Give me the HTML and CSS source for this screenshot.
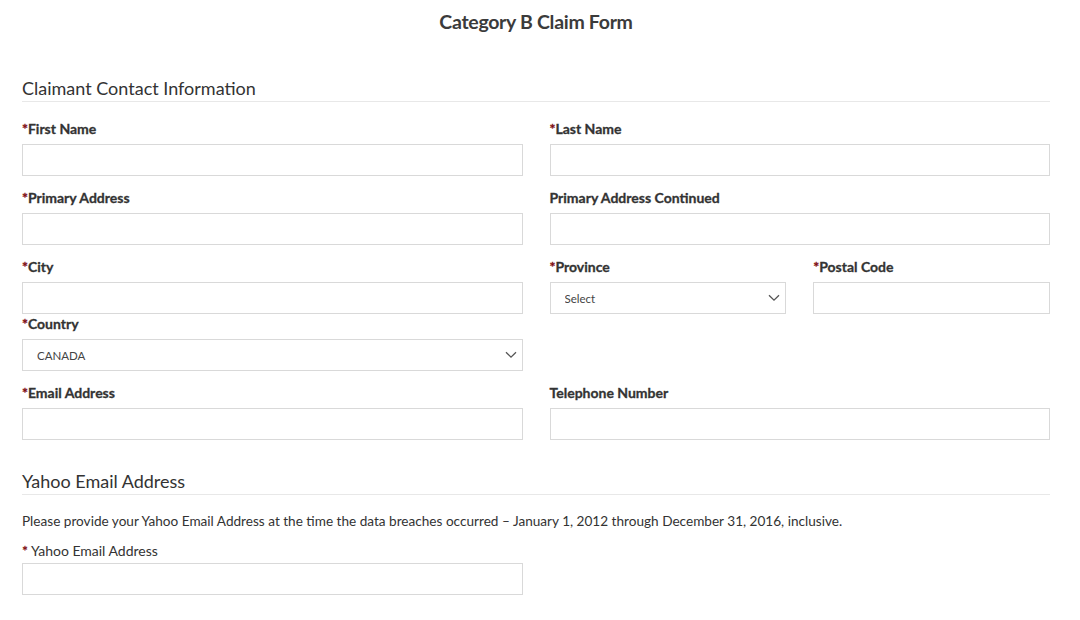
FILE: index.html
```html
<!DOCTYPE html>
<html lang="en">
<head>
    <meta charset="UTF-8">
    <meta name="viewport" content="width=device-width, initial-scale=1.0">
    <title>Category B Claim Form</title>
    <link rel="stylesheet" href="styles.css">
</head>
<body>

    <div class="page">
        <h1 class="form-title">Category B Claim Form</h1>

        <!-- Claimant contact -->
        <h2 class="section-title">Claimant Contact Information</h2>

        <div class="row">
            <div class="field">
                <label class="label"><span class="req">*</span>First Name</label>
                <input type="text" class="input">
            </div>
            <div class="field">
                <label class="label"><span class="req">*</span>Last Name</label>
                <input type="text" class="input">
            </div>
        </div>

        <div class="row">
            <div class="field">
                <label class="label"><span class="req">*</span>Primary Address</label>
                <input type="text" class="input">
            </div>
            <div class="field">
                <label class="label">Primary Address Continued</label>
                <input type="text" class="input">
            </div>
        </div>

        <div class="row">
            <div class="field">
                <label class="label"><span class="req">*</span>City</label>
                <input type="text" class="input">
                <label class="label label-tight"><span class="req">*</span>Country</label>
                <div class="select-wrap">
                    <select class="select">
                        <option>CANADA</option>
                    </select>
                    <svg class="chevron" width="12" height="8" viewBox="0 0 12 8"><path d="M1 1.2 L6 6.2 L11 1.2" fill="none" stroke="#555" stroke-width="1.3"/></svg>
                </div>
            </div>
            <div class="field">
                <div class="split">
                    <div class="field">
                        <label class="label"><span class="req">*</span>Province</label>
                        <div class="select-wrap">
                            <select class="select">
                                <option>Select</option>
                            </select>
                            <svg class="chevron" width="12" height="8" viewBox="0 0 12 8"><path d="M1 1.2 L6 6.2 L11 1.2" fill="none" stroke="#555" stroke-width="1.3"/></svg>
                        </div>
                    </div>
                    <div class="field">
                        <label class="label"><span class="req">*</span>Postal Code</label>
                        <input type="text" class="input">
                    </div>
                </div>
            </div>
        </div>

        <div class="row">
            <div class="field">
                <label class="label"><span class="req">*</span>Email Address</label>
                <input type="text" class="input">
            </div>
            <div class="field">
                <label class="label">Telephone Number</label>
                <input type="text" class="input">
            </div>
        </div>

        <!-- Yahoo email -->
        <h2 class="section-title section-gap">Yahoo Email Address</h2>
        <p class="note">Please provide your Yahoo Email Address at the time the data breaches occurred – January 1, 2012 through December 31, 2016, inclusive.</p>

        <div class="row">
            <div class="field">
                <label class="label label-plain"><span class="req">*</span> Yahoo Email Address</label>
                <input type="text" class="input">
            </div>
            <div class="field"></div>
        </div>
    </div>

</body>
</html>
```

FILE: styles.css
```css
/* Base */
body {
    margin: 0;
    font-family: Lato, 'Liberation Sans', sans-serif;
    color: #333;
    background: #fff;
}

.page {
    width: 1028px;
    padding: 10px 30px 0 22px;
}

/* Titles */
.form-title {
    margin: 0;
    font-size: 19.5px;
    line-height: 24px;
    font-weight: 700;
    text-align: center;
    color: #3b3b3b;
    letter-spacing: -0.3px;
}

.section-title {
    margin: 43px 0 0;
    padding-bottom: 2px;
    font-size: 18px;
    line-height: 22px;
    font-weight: 400;
    color: #333;
    border-bottom: 1px solid #e8e8e8;
}

.section-gap {
    margin-top: 30px;
}

.note {
    margin: 17px 0 12px;
    font-size: 13.6px;
    line-height: 18px;
    color: #333;
}

/* Rows */
.row {
    display: grid;
    grid-template-columns: 1fr 1fr;
    column-gap: 27px;
}

.section-title + .row {
    margin-top: 18px;
}

.row + .row {
    margin-top: 13px;
}

.split {
    display: grid;
    grid-template-columns: 1fr 1fr;
    column-gap: 27px;
}

.field {
    display: flex;
    flex-direction: column;
}

/* Labels */
.label {
    font-size: 14px;
    line-height: 18px;
    font-weight: 700;
    color: #333;
    -webkit-text-stroke: 0.3px #333;
    margin-bottom: 6px;
}

.label-tight {
    margin-top: 1px;
}

.label-plain {
    font-weight: 400;
    -webkit-text-stroke: 0;
    margin-bottom: 3px;
}

.req {
    color: #7d0a0f;
    -webkit-text-stroke: 0.3px #7d0a0f;
}

.label-plain .req {
    -webkit-text-stroke: 0.3px #7d0a0f;
}

/* Inputs */
.input,
.select {
    box-sizing: border-box;
    height: 32px;
    width: 100%;
    margin: 0;
    border: 1px solid #d9d9d9;
    border-radius: 0;
    background: #fff;
    font-family: Lato, 'Liberation Sans', sans-serif;
    outline: none;
}

.select-wrap {
    position: relative;
}

.select {
    appearance: none;
    -webkit-appearance: none;
    padding: 0 14px;
    font-size: 11.5px;
    color: #444;
}

.chevron {
    position: absolute;
    right: 6px;
    top: 12px;
    pointer-events: none;
}
```
